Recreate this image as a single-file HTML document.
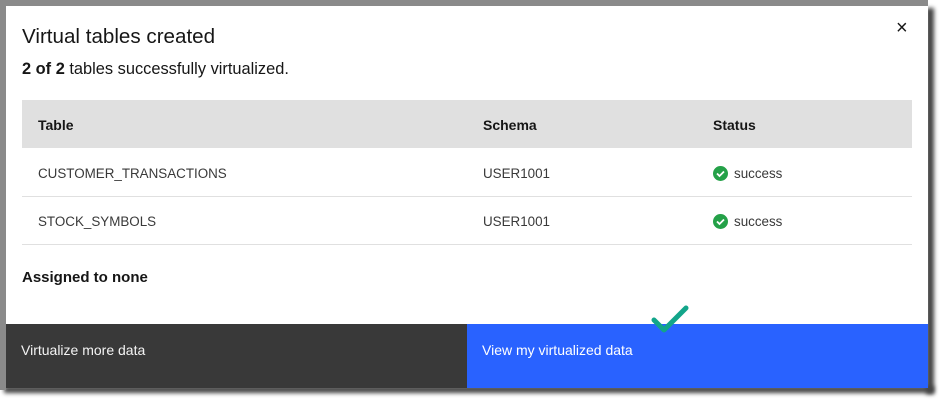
<!DOCTYPE html><html><head><style>
body{margin:0;width:947px;height:405px;background:#fff;position:relative;overflow:hidden;font-family:"Liberation Sans",sans-serif;}
.bgt{position:absolute;left:0;top:0;width:928px;height:6px;background:#8a8a8a}
.bgl{position:absolute;left:0;top:0;width:6px;height:390px;background:#8a8a8a}
.shadowR{position:absolute;left:926px;top:8px;width:8px;height:386px;background:#444;filter:blur(2px)}
.shadowB{position:absolute;left:4px;top:386px;width:930px;height:7px;background:#444;filter:blur(2px)}
.modal{position:absolute;left:6px;top:6px;width:922px;height:382px;background:#fff}
.t{position:absolute;color:#161616;white-space:nowrap}
.hdr{position:absolute;left:16px;top:94px;width:890px;height:48px;background:#e0e0e0}
.line{position:absolute;left:16px;width:890px;height:1px;background:#e0e0e0}
.ic{position:absolute;width:15px;height:15px;border-radius:50%;background:#24a148}
.b1{position:absolute;left:0;top:318px;width:461px;height:64px;background:#393939}
.b2{position:absolute;left:461px;top:318px;width:461px;height:64px;background:#2962ff}
.r{font-size:13.4px;color:#393939}
</style></head><body>
<div class="shadowR"></div><div class="shadowB"></div>
<div class="bgt"></div><div class="bgl"></div>
<div class="modal">
<div class="t" style="left:16px;top:19px;font-size:20.6px">Virtual tables created</div>
<div class="t" style="left:16px;top:54px;font-size:16.4px"><b>2 of 2</b> tables successfully virtualized.</div>
<div class="t" style="left:890px;top:11px;font-size:20px">×</div>
<div class="hdr"></div>
<div class="t" style="left:32px;top:111px;font-size:14px;font-weight:bold">Table</div>
<div class="t" style="left:477px;top:111px;font-size:14px;font-weight:bold">Schema</div>
<div class="t" style="left:707px;top:111px;font-size:14px;font-weight:bold">Status</div>
<div class="t r" style="left:32px;top:160px">CUSTOMER_TRANSACTIONS</div>
<div class="t r" style="left:477px;top:160px">USER1001</div>
<div class="ic" style="left:707px;top:160px"><svg width="15" height="15"><path d="M4 7.5l2.5 2.5 4.5-4.5" stroke="#fff" stroke-width="1.8" fill="none"/></svg></div>
<div class="t r" style="left:728px;top:160px">success</div>
<div class="line" style="top:190px"></div>
<div class="t r" style="left:32px;top:208px">STOCK_SYMBOLS</div>
<div class="t r" style="left:477px;top:208px">USER1001</div>
<div class="ic" style="left:707px;top:208px"><svg width="15" height="15"><path d="M4 7.5l2.5 2.5 4.5-4.5" stroke="#fff" stroke-width="1.8" fill="none"/></svg></div>
<div class="t r" style="left:728px;top:208px">success</div>
<div class="line" style="top:238px"></div>
<div class="t" style="left:16px;top:263px;font-size:15px;font-weight:bold">Assigned to none</div>
<div class="b1"><div class="t" style="left:15px;top:18px;font-size:14px;color:#f4f4f4">Virtualize more data</div></div>
<div class="b2"><div class="t" style="left:15px;top:18px;font-size:14px;color:#fff">View my virtualized data</div></div>
<svg style="position:absolute;left:642px;top:292px" width="46" height="36"><path d="M6 22l10 10 22-22" stroke="#12a58a" stroke-width="5" stroke-linecap="round" stroke-linejoin="round" fill="none"/></svg>
</div>
</body></html>
